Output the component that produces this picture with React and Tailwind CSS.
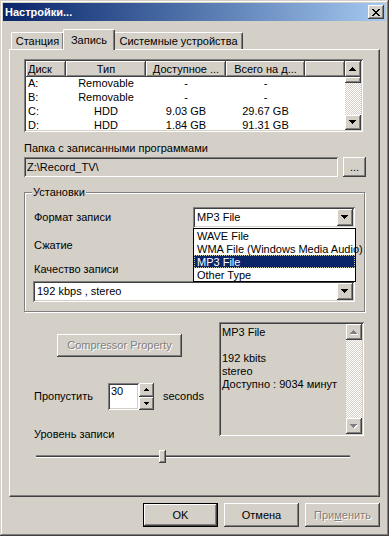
import React from 'react';

// classic 3D borders
const RAISED = 'shadow-[inset_-1px_-1px_#404040,inset_1px_1px_#fff,inset_-2px_-2px_#808080,inset_2px_2px_#d4d0c8]';
const SUNKEN = 'shadow-[inset_1px_1px_#808080,inset_-1px_-1px_#fff,inset_2px_2px_#404040,inset_-2px_-2px_#d4d0c8]';
const TRACK = 'bg-[repeating-conic-gradient(#d4d0c8_0_25%,#fff_0_50%)] bg-[length:2px_2px]';
const DISABLED = 'text-[#808080] [text-shadow:1px_1px_0_#fff]';

const Arrow = ({ up, disabled, small }) => {
  const down = small
    ? [[0, 0, 5], [1, 1, 3], [2, 2, 1]]
    : [[0, 0, 7], [1, 1, 5], [2, 2, 3], [3, 3, 1]];
  const n = down.length;
  const rows = up ? down.map(([x, y, w]) => [x, n - 1 - y, w]) : down;
  const w = small ? 6 : 8;
  return (
    <svg width={w} height={n + 1} shapeRendering="crispEdges">
      {disabled && rows.map(([x, y, rw], i) => (
        <rect key={'s' + i} x={x + 1} y={y + 1} width={rw} height="1" fill="#fff" />
      ))}
      {rows.map(([x, y, rw], i) => (
        <rect key={i} x={x} y={y} width={rw} height="1" fill={disabled ? '#808080' : '#000'} />
      ))}
    </svg>
  );
};

const CloseGlyph = () => {
  const px = [
    [0, 0, 2], [6, 0, 2], [1, 1, 2], [5, 1, 2], [2, 2, 4], [3, 3, 2],
    [2, 4, 4], [1, 5, 2], [5, 5, 2], [0, 6, 2], [6, 6, 2],
  ];
  return (
    <svg width="8" height="7" shapeRendering="crispEdges">
      {px.map(([x, y, w], i) => <rect key={i} x={x} y={y} width={w} height="1" fill="#000" />)}
    </svg>
  );
};

const columns = [
  { label: 'Диск', w: 'w-[40px]', align: 'text-left pl-[2px]' },
  { label: 'Тип', w: 'w-[80px]', align: 'text-center' },
  { label: 'Доступное ...', w: 'w-[80px]', align: 'text-center' },
  { label: 'Всего на д...', w: 'w-[79px]', align: 'text-center' },
];

const drives = [
  ['A:', 'Removable', '-', '-'],
  ['B:', 'Removable', '-', '-'],
  ['C:', 'HDD', '9.03 GB', '29.67 GB'],
  ['D:', 'HDD', '1.84 GB', '91.31 GB'],
];

const formats = ['WAVE File', 'WMA File (Windows Media Audio)', 'MP3 File', 'Other Type'];

const DriveList = () => (
  <div className={`w-[339px] h-[73px] bg-white p-[2px] flex ${SUNKEN}`}>
    <div className="flex-1 flex flex-col overflow-hidden">
      <div className="flex h-[16px] shrink-0">
        {columns.map((c) => (
          <div key={c.label} className={`${c.w} ${c.align} bg-[#d4d0c8] leading-[16px] whitespace-nowrap overflow-hidden ${RAISED}`}>
            {c.label}
          </div>
        ))}
        <div className={`flex-1 bg-[#d4d0c8] ${RAISED}`} />
      </div>
      {drives.map((r) => (
        <div key={r[0]} className="flex h-[14px] shrink-0 leading-[13px]">
          {r.map((v, i) => (
            <div key={i} className={`${columns[i].w} ${columns[i].align} whitespace-nowrap`}>{v}</div>
          ))}
        </div>
      ))}
    </div>
    <div className="w-[16px] flex flex-col">
      <div className={`h-[16px] bg-[#d4d0c8] flex items-center justify-center ${RAISED}`}><Arrow up /></div>
      <div className={`h-[6px] bg-[#d4d0c8] ${RAISED}`} />
      <div className={`flex-1 ${TRACK}`} />
      <div className={`h-[15px] bg-[#d4d0c8] flex items-center justify-center ${RAISED}`}><Arrow /></div>
    </div>
  </div>
);

const Combo = ({ value, className, children }) => (
  <div className={`relative h-[21px] bg-white flex items-center pl-[4px] pr-[2px] ${SUNKEN} ${className}`}>
    <span className="whitespace-nowrap">{value}</span>
    <div className={`ml-auto w-[16px] h-[17px] bg-[#d4d0c8] flex items-center justify-center ${RAISED}`}>
      <Arrow />
    </div>
    {children}
  </div>
);

const Button = ({ children, className = '', def }) => (
  <div className={`w-[75px] h-[24px] bg-[#d4d0c8] flex items-center justify-center ${def ? 'border border-black' : ''} ${RAISED} ${className}`}>
    {children}
  </div>
);

export default function App() {
  return (
    <div className="w-[389px] h-[536px] bg-[#d4d0c8] p-[3px] flex flex-col text-[11px] leading-[13px] text-black font-['Liberation_Sans',Arial,sans-serif] shadow-[inset_-1px_-1px_#404040,inset_1px_1px_#d4d0c8,inset_-2px_-2px_#808080,inset_2px_2px_#fff]">
      {/* title bar */}
      <div className="h-[18px] shrink-0 flex items-center bg-gradient-to-r from-[#0a246a] to-[#a6caf0] pl-[2px] pr-[2px]">
        <span className="text-white font-bold">Настройки...</span>
        <div className={`ml-auto w-[16px] h-[14px] bg-[#d4d0c8] flex items-center justify-center ${RAISED}`}>
          <CloseGlyph />
        </div>
      </div>

      <div className="pl-[6px] flex flex-col">
        {/* tabs */}
        <div className="mt-[8px] h-[20px] pl-[2px] flex items-end">
          <div className="w-[52px] h-[17px] flex items-center justify-center border-l border-t border-white rounded-tl-[2px] shadow-[inset_-1px_0_#808080]">
            Станция
          </div>
          <div className="relative z-10 w-[52px] h-[21px] -mb-px bg-[#d4d0c8] flex items-center justify-center border-l border-t border-white border-r border-r-[#404040] rounded-t-[2px] shadow-[inset_-1px_0_#808080]">
            Запись
          </div>
          <div className="w-[128px] h-[17px] flex items-center justify-center border-t border-white border-r border-r-[#404040] rounded-tr-[2px] shadow-[inset_-1px_0_#808080]">
            Системные устройства
          </div>
        </div>

        {/* tab panel */}
        <div className="w-[371px] h-[448px] flex flex-col border-l border-t border-white border-r border-r-[#404040] border-b border-b-[#404040] shadow-[inset_-1px_-1px_#808080] pl-[14px] pt-[9px]">
          <DriveList />

          <div className="mt-[10px] h-[13px]">Папка с записанными программами</div>
          <div className="mt-[2px] flex">
            <div className={`w-[314px] h-[20px] flex items-center pl-[3px] ${SUNKEN}`}>Z:\Record_TV\</div>
            <div className={`ml-[5px] w-[23px] h-[20px] flex items-center justify-center ${RAISED}`}>...</div>
          </div>

          {/* group box */}
          <div className="relative mt-[15px] w-[341px] h-[120px] border border-[#808080] shadow-[1px_1px_0_#fff,inset_1px_1px_0_#fff] flex flex-col pt-[14px]">
            <span className="absolute left-[7px] -top-[7px] px-px bg-[#d4d0c8]">Установки</span>
            <div className="flex items-center pl-[9px] pr-[9px]">
              <span>Формат записи</span>
              <Combo value="MP3 File" className="ml-auto w-[162px] z-10">
                <div className="absolute left-0 top-[21px] w-[163px] bg-white border border-black">
                  {formats.map((f) => (
                    <div
                      key={f}
                      className={`h-[13px] leading-[12px] pl-[2px] whitespace-nowrap ${f === 'MP3 File' ? 'bg-[#0a246a] text-white border border-dotted border-[#c8c8a0]' : 'border border-transparent'}`}
                    >
                      {f}
                    </div>
                  ))}
                </div>
              </Combo>
            </div>
            <div className="mt-[10px] h-[14px] leading-[14px] pl-[9px]">Сжатие</div>
            <div className="mt-[10px] h-[14px] leading-[14px] pl-[9px]">Качество записи</div>
            <Combo value="192 kbps , stereo" className="mt-[5px] ml-[8px] w-[322px]" />
          </div>

          {/* compressor / skip / info */}
          <div className="mt-[10px] flex">
            <div className="w-[195px] flex flex-col pt-[12px]">
              <div className={`ml-[33px] w-[125px] h-[23px] flex items-center justify-center ${RAISED}`}>
                <span className={DISABLED}>Compressor Property</span>
              </div>
              <div className="mt-[26px] flex items-center">
                <span className="pl-[10px] w-[84px]">Пропустить</span>
                <div className={`w-[31px] h-[27px] bg-white pl-[3px] pt-[2px] ${SUNKEN}`}>30</div>
                <div className="flex flex-col">
                  <div className={`w-[15px] h-[14px] bg-[#d4d0c8] flex items-center justify-center ${RAISED}`}><Arrow up small /></div>
                  <div className={`w-[15px] h-[13px] bg-[#d4d0c8] flex items-center justify-center ${RAISED}`}><Arrow small /></div>
                </div>
                <span className="ml-[9px]">seconds</span>
              </div>
              <div className="mt-[17px] h-[14px] leading-[14px] pl-[10px]">Уровень записи</div>
            </div>
            <div className={`w-[145px] h-[114px] p-[2px] flex ${SUNKEN}`}>
              <div className="flex-1 pl-[1px] pt-[2px] whitespace-nowrap">
                <div>MP3 File</div>
                <div className="h-[13px]" />
                <div>192 kbits</div>
                <div>stereo</div>
                <div>Доступно : 9034 минут</div>
              </div>
              <div className="w-[16px] flex flex-col">
                <div className={`h-[16px] bg-[#d4d0c8] flex items-center justify-center ${RAISED}`}><Arrow up disabled /></div>
                <div className={`flex-1 ${TRACK}`} />
                <div className={`h-[16px] bg-[#d4d0c8] flex items-center justify-center ${RAISED}`}><Arrow disabled /></div>
              </div>
            </div>
          </div>

          {/* level slider */}
          <div className="relative mt-[9px] ml-[12px] w-[314px] h-[14px]">
            <div className="absolute left-0 right-0 top-[5px] h-[3px] bg-[#404040] border-t border-t-[#808080] border-b border-b-white" />
            <div className={`absolute left-[123px] top-0 w-[7px] h-[13px] bg-[#d4d0c8] ${RAISED}`} />
          </div>
        </div>

        {/* dialog buttons */}
        <div className="mt-[6px] w-[371px] flex justify-end gap-[6px]">
          <Button def>OK</Button>
          <Button>Отмена</Button>
          <Button>
            <span className={DISABLED}>При<span className="underline">м</span>енить</span>
          </Button>
        </div>
      </div>
    </div>
  );
}
